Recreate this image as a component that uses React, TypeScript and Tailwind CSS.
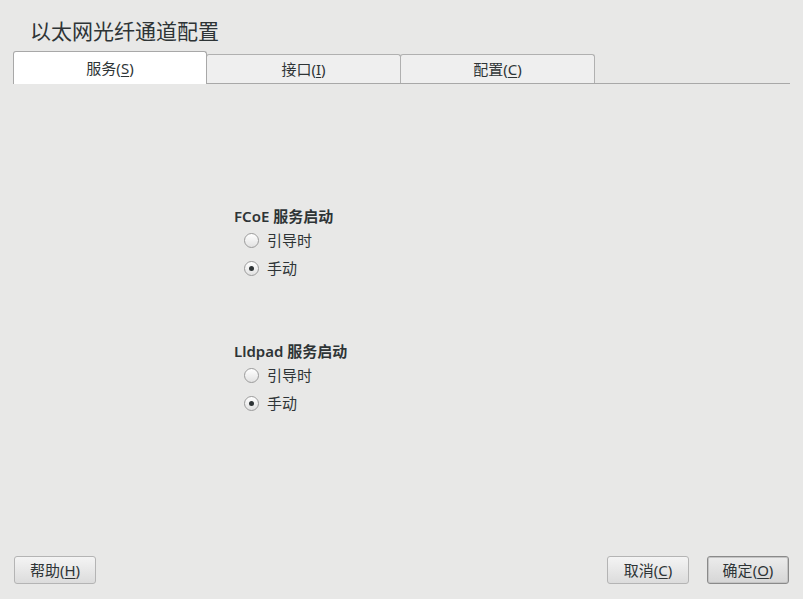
const font = { fontFamily: '"Noto Sans", "Noto Sans CJK SC", sans-serif' };

const Radio = ({ checked, label }: { checked?: boolean; label: string }) => (
  <div className="flex items-center h-7 pl-[10px]">
    <span className="w-[15px] h-[15px] rounded-full border border-[#9b9b9b] bg-gradient-to-b from-[#ffffff] to-[#e2e2e2] flex items-center justify-center">
      {checked && <span className="w-[5px] h-[5px] rounded-full bg-[#2e3436]" />}
    </span>
    <span className="ml-[8px] text-[15px] text-[#2e3436]">{label}</span>
  </div>
);

const Group = ({ name }: { name: string }) => (
  <div className="flex flex-col">
    <div className="text-[15px] text-[#2e3436] leading-[20px] font-semibold">
      {name} <span className="font-bold">服务启动</span>
    </div>
    <Radio label="引导时" />
    <Radio checked label="手动" />
  </div>
);

const Tab = ({ label, u, active }: { label: string; u: string; active?: boolean }) => (
  <div
    className={
      active
        ? "w-[194px] h-[33px] -mb-px bg-white border border-[#a8a8a8] border-b-0 rounded-t-[3px] flex items-center justify-center text-[15px] text-[#2e3436] relative z-10"
        : "w-[195px] h-[29px] bg-[#efefef] border border-[#b0b0b0] border-b-0 -ml-px rounded-t-[3px] flex items-center justify-center text-[15px] text-[#2e3436]"
    }
  >
    {label}(<span className="underline underline-offset-2 decoration-1">{u}</span>)
  </div>
);

const Button = ({ label, u, def }: { label: string; u: string; def?: boolean }) => (
  <button
    className={
      "w-[82px] h-[28px] rounded-[3px] bg-gradient-to-b text-[15px] text-[#2e3436] flex items-center justify-center " +
      (def
        ? "from-[#ececec] to-[#d6d6d6] border border-[#8a8a8a] shadow-[inset_0_0_0_1px_#c4c4c4]"
        : "from-[#f4f4f4] to-[#dcdcdc] border border-[#b4b4b4]")
    }
  >
    {label}(<span className="underline underline-offset-2 decoration-1">{u}</span>)
  </button>
);

export default function App() {
  return (
    <div className="w-[803px] h-[599px] bg-[#e8e8e7] flex flex-col overflow-hidden" style={font}>
      <div className="pl-[30px] pt-[16px] h-[51px] text-[21px] text-[#2e3436] leading-[30px]">以太网光纤通道配置</div>
      <div className="flex items-end pl-[13px] pr-[13px]">
        <div className="flex items-end w-full border-b border-[#a8a8a8]">
          <Tab label="服务" u="S" active />
          <Tab label="接口" u="I" />
          <Tab label="配置" u="C" />
        </div>
      </div>
      <div className="flex-1 pl-[234px] pt-[122px] flex flex-col gap-[59px]">
        <Group name="FCoE" />
        <Group name="Lldpad" />
      </div>
      <div className="flex items-center justify-between px-[14px] pb-[15px]">
        <Button label="帮助" u="H" />
        <div className="flex gap-[18px]">
          <Button label="取消" u="C" />
          <Button label="确定" u="O" def />
        </div>
      </div>
    </div>
  );
}
